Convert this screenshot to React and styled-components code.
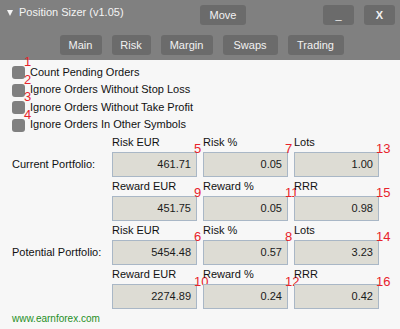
import React from "react";
import styled, { createGlobalStyle } from "styled-components";

const GlobalStyle = createGlobalStyle`
  html, body {
    margin: 0;
    padding: 0;
    background: #f7f7f7;
  }
`;

const Panel = styled.div`
  width: 400px;
  height: 329px;
  background: #f7f7f7;
  font-family: "Liberation Sans", Arial, sans-serif;
  font-size: 11px;
  color: #111;
  overflow: hidden;
`;

const Header = styled.div`
  background: #808080;
  padding: 5px 5px 5px 7px;
`;

const TitleRow = styled.div`
  display: flex;
  align-items: flex-start;
  height: 20px;
`;

const Title = styled.div`
  width: 193px;
  display: flex;
  align-items: center;
  gap: 6px;
  line-height: 15px;
  color: #f4f4f4;
`;

const Arrow = styled.span`
  width: 0;
  height: 0;
  border-left: 3.5px solid transparent;
  border-right: 3.5px solid transparent;
  border-top: 6px solid #f4f4f4;
`;

const HeaderButton = styled.div`
  width: ${(p) => p.$w}px;
  height: 20px;
  line-height: 20px;
  margin-left: ${(p) => (p.$push ? "auto" : p.$gap ? `${p.$gap}px` : "0")};
  background: #6b6b6b;
  border-radius: 3px;
  color: #f2f2f2;
  text-align: center;
  font-weight: ${(p) => (p.$bold ? "bold" : "normal")};
`;

const TabRow = styled.div`
  display: flex;
  justify-content: center;
  gap: 10px;
  margin-top: 10px;
  padding-left: 1px;
`;

const Body = styled.div`
  padding: 3px 0 0 12px;
`;

const OptionRow = styled.div`
  position: relative;
  height: 17.5px;
  display: flex;
  align-items: center;
  gap: 5px;
`;

const Check = styled.span`
  width: 13px;
  height: 13px;
  border-radius: 3px;
  background: #808080;
  margin-top: 2px;
`;

const Marker = styled.span`
  position: absolute;
  left: ${(p) => p.$left}px;
  top: ${(p) => p.$top}px;
  font-size: 13px;
  line-height: 13px;
  color: #e8232b;
`;

const Grid = styled.div`
  display: grid;
  grid-template-columns: 94px 85px 85px 85px;
  grid-auto-rows: 44px;
  column-gap: 6px;
`;

const PortfolioLabel = styled.div`
  align-self: end;
  height: 25px;
  line-height: 25px;
`;

const Field = styled.div`
  position: relative;
`;

const FieldLabel = styled.div`
  height: 19px;
  line-height: 19px;
`;

const ValueBox = styled.div`
  box-sizing: border-box;
  height: 25px;
  line-height: 23px;
  border: 1px solid #a9b7c6;
  background: #dddcd4;
  text-align: right;
  padding-right: 5px;
  color: #1a1a1a;
`;

const Footer = styled.div`
  margin-top: 3px;
  line-height: 14px;
  font-size: 10px;
  color: #1f8f1f;
`;

const tabs = [
  ["Main", 42],
  ["Risk", 39],
  ["Margin", 52],
  ["Swaps", 55],
  ["Trading", 56],
];

const options = [
  "Count Pending Orders",
  "Ignore Orders Without Stop Loss",
  "Ignore Orders Without Take Profit",
  "Ignore Orders In Other Symbols",
];

const rows = [
  {
    label: "Current Portfolio:",
    fields: [
      ["Risk EUR", "461.71", 5],
      ["Risk %", "0.05", 7],
      ["Lots", "1.00", 13],
    ],
  },
  {
    fields: [
      ["Reward EUR", "451.75", 9],
      ["Reward %", "0.05", 11],
      ["RRR", "0.98", 15],
    ],
  },
  {
    label: "Potential Portfolio:",
    fields: [
      ["Risk EUR", "5454.48", 6],
      ["Risk %", "0.57", 8],
      ["Lots", "3.23", 14],
    ],
  },
  {
    fields: [
      ["Reward EUR", "2274.89", 10],
      ["Reward %", "0.24", 12],
      ["RRR", "0.42", 16],
    ],
  },
];

export default function App() {
  return (
    <Panel>
      <GlobalStyle />
      <Header>
        <TitleRow>
          <Title>
            <Arrow />
            Position Sizer (v1.05)
          </Title>
          <HeaderButton $w={46}>Move</HeaderButton>
          <HeaderButton $w={31} $push>
            _
          </HeaderButton>
          <HeaderButton $w={31} $gap={10} $bold>
            X
          </HeaderButton>
        </TitleRow>
        <TabRow>
          {tabs.map(([name, w]) => (
            <HeaderButton key={name} $w={w}>
              {name}
            </HeaderButton>
          ))}
        </TabRow>
      </Header>
      <Body>
        {options.map((text, i) => (
          <OptionRow key={text}>
            <Check />
            {text}
            <Marker $left={12} $top={-8}>
              {i + 1}
            </Marker>
          </OptionRow>
        ))}
        <Grid>
          {rows.map((row, r) => (
            <React.Fragment key={r}>
              {row.label ? <PortfolioLabel>{row.label}</PortfolioLabel> : <div />}
              {row.fields.map(([label, value, n]) => (
                <Field key={n}>
                  <FieldLabel>{label}</FieldLabel>
                  <ValueBox>{value}</ValueBox>
                  <Marker $left={82} $top={r === 3 ? 10 : 8.5}>
                    {n}
                  </Marker>
                </Field>
              ))}
            </React.Fragment>
          ))}
        </Grid>
        <Footer>www.earnforex.com</Footer>
      </Body>
    </Panel>
  );
}
